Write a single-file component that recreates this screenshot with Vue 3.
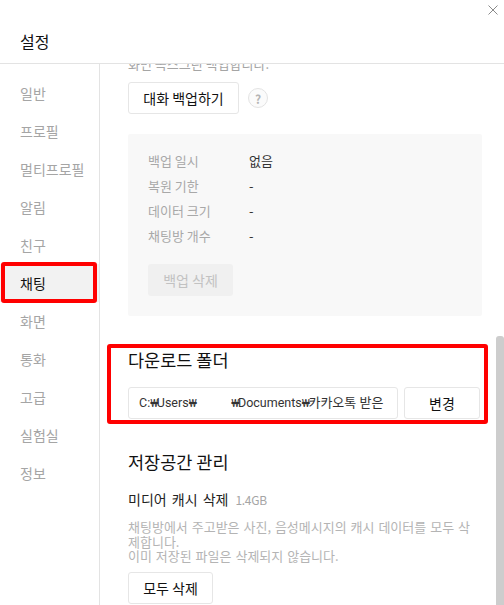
<script setup>
const nav = ['일반','프로필','멀티프로필','알림','친구','채팅','화면','통화','고급','실험실','정보']
const rows = [['백업 일시','없음'],['복원 기한','-'],['데이터 크기','-'],['채팅방 개수','-']]
</script>

<template>
  <div class="win">
    <header class="head">
      <h1 class="title">설정</h1>
      <svg class="close" width="10" height="10" viewBox="0 0 10 10"><path d="M0.5 0.5L9.5 9.5M9.5 0.5L0.5 9.5" stroke="#8a8a8a" stroke-width="1" fill="none"/></svg>
    </header>
    <div class="body">
      <nav class="side">
        <div v-for="n in nav" :key="n" class="item" :class="{ on: n === '채팅' }">{{ n }}</div>
        <div class="mark-nav"></div>
      </nav>
      <main class="main">
        <div class="inner">
          <p class="clipped">화면 녹스크린 백업합니다.</p>
          <div class="btn-row">
            <button class="btn backup">대화 백업하기</button>
            <span class="q">?</span>
          </div>
          <section class="panel">
            <div v-for="r in rows" :key="r[0]" class="row">
              <span class="k">{{ r[0] }}</span><span class="v">{{ r[1] }}</span>
            </div>
            <div class="del">백업 삭제</div>
          </section>
          <section class="dl">
            <div class="mark-dl"></div>
            <h2 class="h">다운로드 폴더</h2>
            <div class="path-row">
              <div class="path">C:<span class="won">₩</span>Users<span class="won">₩</span><span class="gap"></span><span class="won">₩</span>Documents<span class="won">₩</span><span class="kr">카카오톡 받은</span></div>
              <button class="btn change">변경</button>
            </div>
          </section>
          <section class="store">
            <h2 class="h">저장공간 관리</h2>
            <div class="cache"><span class="cname">미디어 캐시 삭제</span><span class="size">1.4GB</span></div>
            <p class="desc">채팅방에서 주고받은 사진, 음성메시지의 캐시 데이터를 모두 삭제합니다.<br>이미 저장된 파일은 삭제되지 않습니다.</p>
            <button class="btn all">모두 삭제</button>
          </section>
        </div>
        <div class="thumb"></div>
      </main>
    </div>
  </div>
</template>

<style>
html, body { margin: 0; background: #fff; overflow: hidden; }
</style>

<style scoped>
.win { width: 504px; height: 605px; display: flex; flex-direction: column; overflow: hidden; font-family: "Noto Sans CJK KR", "Noto Sans", sans-serif; color: #1e1e1e; background: #fff; }
.head { position: relative; height: 63px; border-bottom: 1px solid #e3e3e3; box-sizing: content-box; flex: none; }
.title { margin: 0; padding: 29px 0 0 20px; font-size: 16px; line-height: 24px; font-weight: 400; color: #111; }
.close { position: absolute; left: 488px; top: 5px; }
.body { flex: 1; display: flex; min-height: 0; }
.side { position: relative; width: 99px; flex: none; border-right: 1px solid #e3e3e3; padding-top: 10px; box-sizing: content-box; }
.item { height: 38px; line-height: 38px; padding-left: 20px; font-size: 14px; color: #a5a5a5; }
.item.on { color: #111; background: #f2f2f2; }
.mark-nav { position: absolute; left: 1px; top: 198px; width: 96px; height: 41px; border: 4px solid #f00; border-radius: 3px; box-sizing: border-box; }
.main { position: relative; flex: 1; overflow: hidden; }
.inner { padding: 0 24px 0 28px; margin-top: -10px; }
.clipped { margin: 0; font-size: 13px; line-height: 20px; color: #a5a5a5; height: 20px; }
.btn-row { display: flex; align-items: center; gap: 9px; margin-top: 8px; }
.btn { font: inherit; font-size: 14px; background: #fff; border: 1px solid #e6e6e6; border-radius: 3px; color: #111; padding: 0; }
.backup { width: 111px; height: 32px; }
.q { width: 20px; height: 20px; box-sizing: border-box; background: #fbfbfb; border: 1px solid #e3e3e3; border-radius: 50%; display: flex; align-items: center; justify-content: center; font-size: 12px; font-weight: 700; color: #b4b4b4; }
.panel { margin-top: 20px; width: 354px; background: #f8f8f8; border-radius: 2px; padding: 14px 20px 0; height: 182px; box-sizing: border-box; }
.row { height: 25px; line-height: 25px; font-size: 13px; display: flex; }
.k { width: 101px; color: #a8a8a8; }
.v { color: #333; }
.del { margin-top: 16px; width: 85px; height: 32px; line-height: 32px; text-align: center; background: #f0f0f0; color: #c2c2c2; font-size: 14px; border-radius: 3px; }
.dl { position: relative; margin-top: 28px; }
.mark-dl { position: absolute; left: -21px; top: 0; width: 381px; height: 80px; border: 4px solid #f00; border-radius: 3px; box-sizing: border-box; pointer-events: none; }
.h { margin: 0; font-size: 17.5px; line-height: 26px; font-weight: 400; color: #111; padding-top: 3px; }
.path-row { display: flex; gap: 6px; margin-top: 14px; }
.path { width: 270px; height: 32px; line-height: 30px; box-sizing: border-box; border: 1px solid #e6e6e6; border-radius: 3px; padding-left: 10px; font-family: Roboto, "Noto Sans CJK KR", sans-serif; font-size: 12.5px; color: #333; white-space: nowrap; overflow: hidden; }
.won { font-size: 11px; letter-spacing: -1.5px; }
.kr { font-size: 13px; }
.gap { display: inline-block; width: 36px; }
.change { width: 76px; height: 32px; }
.store { margin-top: 27px; }
.cache { margin-top: 13px; line-height: 20px; }
.cname { color: #222; font-size: 14px; word-spacing: 2px; }
.size { color: #a5a5a5; margin-left: 7px; font-size: 12px; letter-spacing: -0.3px; }
.desc { margin: 10px 0 0; width: 345px; font-size: 13px; line-height: 14.5px; color: #b4b4b4; word-spacing: 1px; }
.all { margin-top: 8px; width: 85px; height: 32px; }
.thumb { position: absolute; left: 396px; top: 272px; width: 8px; height: 300px; background: #cdcdcd; border-radius: 3px 3px 0 0; }
</style>
